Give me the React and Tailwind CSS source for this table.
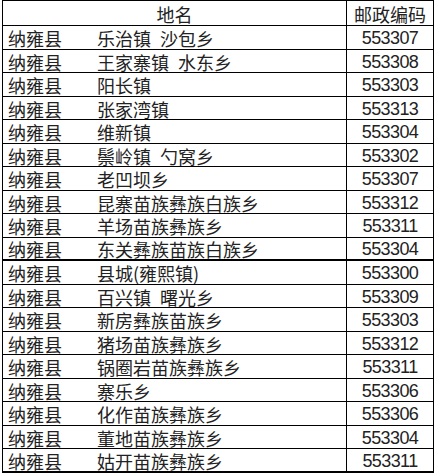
const rows = [
  ["乐治镇\u2002沙包乡", "553307"],
  ["王家寨镇\u2002水东乡", "553308"],
  ["阳长镇", "553303"],
  ["张家湾镇", "553313"],
  ["维新镇", "553304"],
  ["鬃岭镇\u2002勺窝乡", "553302"],
  ["老凹坝乡", "553307"],
  ["昆寨苗族彝族白族乡", "553312"],
  ["羊场苗族彝族乡", "553311"],
  ["东关彝族苗族白族乡", "553304"],
  ["县城(雍熙镇)", "553300"],
  ["百兴镇\u2002曙光乡", "553309"],
  ["新房彝族苗族乡", "553303"],
  ["猪场苗族彝族乡", "553312"],
  ["锅圈岩苗族彝族乡", "553311"],
  ["寨乐乡", "553306"],
  ["化作苗族彝族乡", "553306"],
  ["董地苗族彝族乡", "553304"],
  ["姑开苗族彝族乡", "553311"],
];

const cjk = { fontFamily: '"Noto Sans CJK SC", sans-serif' };
const num = { fontFamily: '"Liberation Sans", "DejaVu Sans", sans-serif' };

export default function App() {
  return (
    <div className="w-[438px] h-[475px] bg-white text-[#222]">
      <div className="ml-[2px] w-[432px] border-t border-l border-r border-black">
        {/* header */}
        <div className="flex h-[25px] border-b border-black">
          <div
            className="w-[344px] border-r border-black flex items-center justify-center text-[18px] leading-[19px] pt-[2px]"
            style={cjk}
          >
            地名
          </div>
          <div
            className="flex-1 flex items-center justify-center text-[18px] leading-[19px] pt-[2px]"
            style={cjk}
          >
            邮政编码
          </div>
        </div>

        {rows.map(([place, code], i) => (
          <div
            key={i}
            className={
              "flex border-black " +
              (i % 2 === 0 ? "h-[24px] " : "h-[23px] ") +
              (i === 9 || i === 18 ? "border-b-2" : "border-b")
            }
          >
            <div
              className="w-[344px] border-r border-black flex items-center text-[18px] leading-[19px] pt-[2px] pl-[5px]"
              style={cjk}
            >
              <span className="w-[89px] shrink-0">纳雍县</span>
              <span className="whitespace-pre">{place}</span>
            </div>
            <div
              className="flex-1 flex items-center justify-center text-[18px] leading-[19px] pt-[2px] tracking-[-0.6px]"
              style={num}
            >
              {code}
            </div>
          </div>
        ))}
      </div>
    </div>
  );
}
